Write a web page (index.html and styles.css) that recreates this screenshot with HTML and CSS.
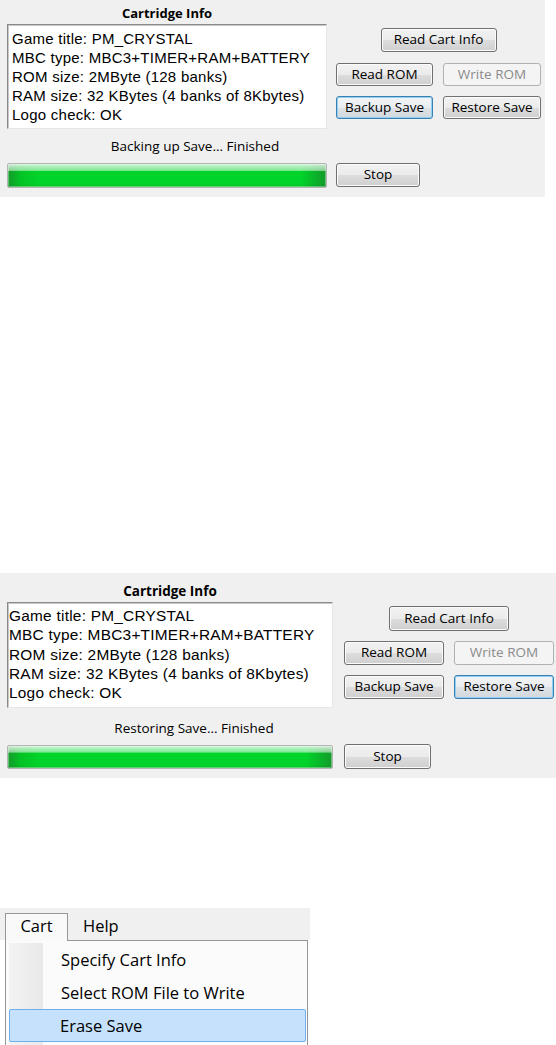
FILE: index.html
```html
<!DOCTYPE html>
<html>
<head>
<meta charset="utf-8">
<link rel="stylesheet" href="styles.css">
</head>
<body>
<section class="panel p1">
  <div class="title">Cartridge Info</div>
  <div class="info">Game title: PM_CRYSTAL<br>MBC type: MBC3+TIMER+RAM+BATTERY<br>ROM size: 2MByte (128 banks)<br>RAM size: 32 KBytes (4 banks of 8Kbytes)<br>Logo check: OK</div>
  <div class="actions">
    <div class="row row-top"><button class="btn btn-cart">Read Cart Info</button></div>
    <div class="row row-mid"><button class="btn btn-half">Read ROM</button><button class="btn btn-half" disabled>Write ROM</button></div>
    <div class="row row-low"><button class="btn btn-half focus">Backup Save</button><button class="btn btn-half">Restore Save</button></div>
  </div>
  <div class="status">Backing up Save... Finished</div>
  <div class="progress"></div>
  <button class="btn stop">Stop</button>
</section>

<section class="panel p2">
  <div class="title">Cartridge Info</div>
  <div class="info">Game title: PM_CRYSTAL<br>MBC type: MBC3+TIMER+RAM+BATTERY<br>ROM size: 2MByte (128 banks)<br>RAM size: 32 KBytes (4 banks of 8Kbytes)<br>Logo check: OK</div>
  <div class="actions">
    <div class="row row-top"><button class="btn btn-cart">Read Cart Info</button></div>
    <div class="row row-mid"><button class="btn btn-half">Read ROM</button><button class="btn btn-half" disabled>Write ROM</button></div>
    <div class="row row-low"><button class="btn btn-half">Backup Save</button><button class="btn btn-half focus">Restore Save</button></div>
  </div>
  <div class="status">Restoring Save... Finished</div>
  <div class="progress"></div>
  <button class="btn stop">Stop</button>
</section>

<section class="menu">
  <div class="menubar">
    <span class="menu-tab open">Cart</span>
    <span class="menu-tab">Help</span>
  </div>
  <div class="dropdown">
    <div class="item">Specify Cart Info</div>
    <div class="item">Select ROM File to Write</div>
    <div class="item active">Erase Save</div>
  </div>
</section>
</body>
</html>
```

FILE: styles.css
```css
html, body {
  margin: 0;
  padding: 0;
  background: #ffffff;
}

body {
  width: 556px;
  height: 1045px;
  overflow: hidden;
  font-family: "Open Sans", "Noto Sans", sans-serif;
  color: #000;
}

.panel {
  display: grid;
  box-sizing: border-box;
  background: #f0f0f0;
  padding-left: 7px;
}

.p1 {
  width: 545px;
  height: 197px;
  grid-template-columns: 320px 205px;
  column-gap: 9px;
  grid-template-rows: 24px 105px 34px 25px;
}

.p2 {
  width: 556px;
  height: 205px;
  margin-top: 376px;
  grid-template-columns: 326px 210px;
  column-gap: 11px;
  grid-template-rows: 29px 106px 37px 24px;
}

.title {
  grid-column: 1;
  grid-row: 1;
  text-align: center;
  font-weight: 700;
  font-size: 13px;
  align-self: center;
  line-height: 18px;
  padding-top: 1px;
}

.p2 .title {
  font-size: 13.5px;
  padding-top: 6px;
}

.info {
  grid-column: 1;
  grid-row: 2;
  box-sizing: border-box;
  background: #fff;
  border: 1px solid;
  border-color: #8a8a8a #e6e6e6 #e6e6e6 #8a8a8a;
  box-shadow: inset 1px 1px 0 #c8c8c8;
  font-family: "Liberation Sans", Arial, sans-serif;
  font-size: 15px;
  letter-spacing: 0.25px;
  line-height: 19px;
  padding: 4px 0 0 4px;
  white-space: nowrap;
  overflow: hidden;
}

.p2 .info {
  font-size: 15.4px;
  line-height: 19.3px;
  padding: 3px 0 0 1px;
}

.actions {
  grid-column: 2;
  grid-row: 2;
  display: flex;
  flex-direction: column;
  padding-top: 4px;
}

.row {
  display: flex;
  gap: 10px;
}

.row-top { justify-content: center; }
.row-mid { margin-top: 11px; }
.row-low { margin-top: 10px; }

.p2 .row-mid { margin-top: 10px; }

.status {
  grid-column: 1;
  grid-row: 3;
  align-self: center;
  text-align: center;
  font-size: 13.5px;
  padding-left: 56px;
  white-space: nowrap;
}

.p2 .status {
  padding-left: 48px;
  padding-top: 2px;
}

.progress {
  grid-column: 1;
  grid-row: 4;
  box-sizing: border-box;
  border: 1px solid #b4b4b4;
  border-radius: 2px;
  background:
    linear-gradient(to bottom, rgba(255,255,255,0.8) 0, rgba(255,255,255,0.5) 28%, rgba(255,255,255,0) 32%, rgba(0,0,0,0) 85%, rgba(0,60,0,0.12) 100%),
    linear-gradient(to right, #169a2c 0, #03c425 4%, #00d42a 10%, #00d42a 92%, #0bb02a 97%, #169a2c 100%);
  box-shadow: inset 0 0 0 1px rgba(255,255,255,0.35);
}

.btn {
  box-sizing: border-box;
  font-family: "Open Sans", "Noto Sans", sans-serif;
  font-size: 13.5px;
  color: #000;
  padding: 0;
  border: 1px solid #707070;
  border-radius: 3px;
  background: linear-gradient(to bottom, #f2f2f2 0, #ebebeb 50%, #dddddd 51%, #cfcfcf 100%);
  box-shadow: inset 0 0 0 1px #fbfbfb;
  line-height: 1;
  white-space: nowrap;
}

.btn-cart { width: 116px; height: 24px; }
.btn-half { width: 97px; height: 23px; }
.row .btn-half + .btn-half { width: 98px; }

.p2 .btn-cart { width: 120px; height: 25px; }
.p2 .btn-half, .p2 .row .btn-half + .btn-half { width: 100px; height: 24px; }

.btn:disabled {
  color: #8b8b8b;
  border-color: #adb2b5;
  background: #f4f4f4;
  box-shadow: none;
}

.btn.focus {
  border-color: #3c7fb1;
  box-shadow: inset 0 0 0 1px #8fd0f4;
  background: linear-gradient(to bottom, #f2f4f6 0, #eaedf0 50%, #dde2e6 51%, #d2d8dc 100%);
}

.stop {
  grid-column: 2;
  grid-row: 4;
  width: 84px;
  height: 24px;
}

.p2 .stop {
  width: 87px;
  height: 25px;
  margin-top: -1px;
}

/* Menu */
.menu {
  margin-top: 130px;
  width: 310px;
}

.menubar {
  display: flex;
  align-items: flex-end;
  height: 32px;
  background: #f0f0f0;
  padding-left: 5px;
  box-sizing: border-box;
}

.menu-tab {
  box-sizing: border-box;
  height: 28px;
  font-size: 16.5px;
  line-height: 24px;
  padding: 0 14px;
  border: 1px solid transparent;
  border-bottom: none;
  margin-bottom: -1px;
  position: relative;
  z-index: 1;
}

.menu-tab.open {
  width: 63px;
  text-align: center;
  padding: 0;
  border-color: #979797;
  background: #f9f9f9;
}

.dropdown {
  margin-left: 5px;
  width: 303px;
  height: 110px;
  box-sizing: border-box;
  border: 1px solid #979797;
  border-bottom: none;
  padding: 2px 1px 0 3px;
  background:
    linear-gradient(to right, #f3f3f3, #e9e9e9) no-repeat 3px 2px / 34px 100%,
    #fbfbfb;
}

.item {
  box-sizing: border-box;
  height: 33px;
  font-size: 16.5px;
  line-height: 31px;
  padding-left: 51px;
  border: 1px solid transparent;
  border-radius: 2px;
  white-space: nowrap;
}

.item.active {
  background: #c5e1fb;
  border-color: #6fb0ec;
  padding-left: 50px;
  margin-left: 0;
}
```
